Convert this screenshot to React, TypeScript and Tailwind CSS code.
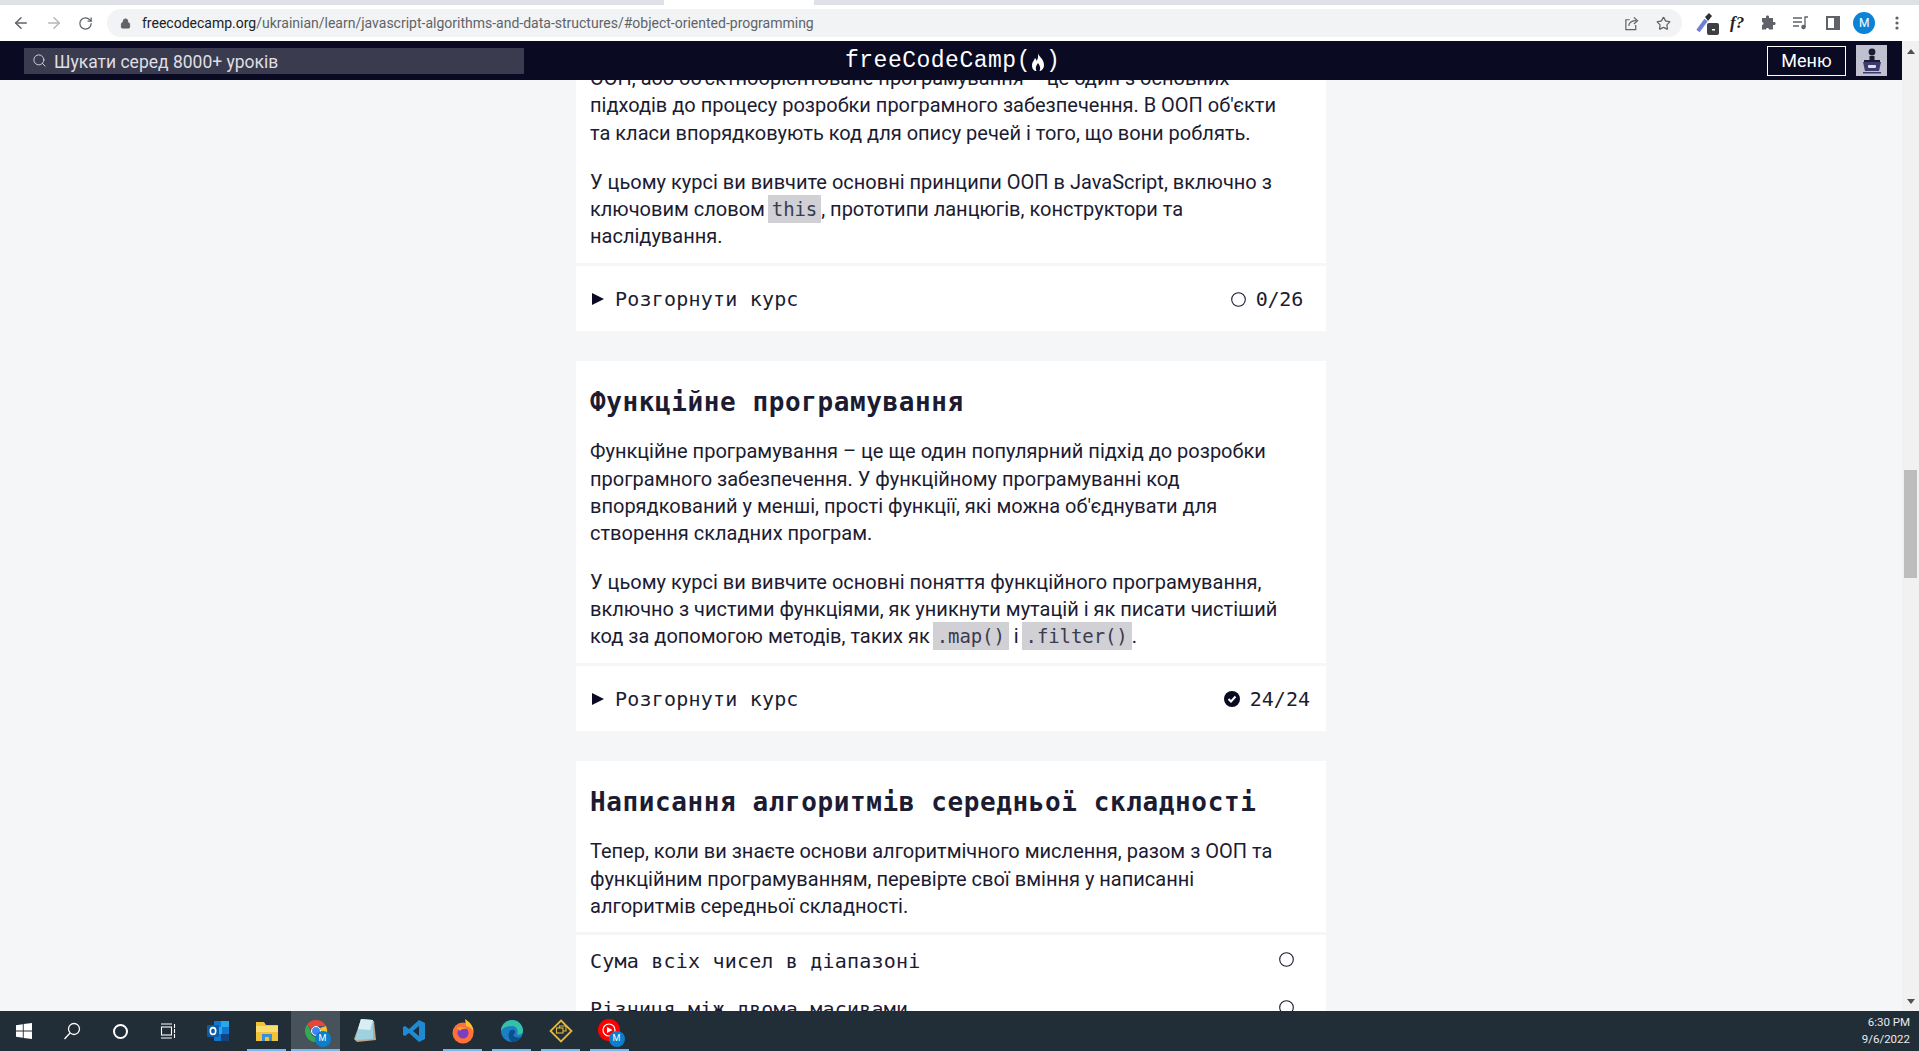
import { Search, ArrowLeft, ArrowRight, RotateCw, Lock, Star } from 'lucide-react';
import type { ReactNode } from 'react';

const bodyFont = "font-['Roboto','Liberation_Sans',sans-serif]";
const monoFont = "font-['DejaVu_Sans_Mono','Liberation_Mono',monospace]";

const Code = ({ children }: { children: string }) => (
    <code className={`${monoFont} text-[19px] tracking-[-0.1px] bg-[#d0d0d5] text-[#3b3b4f] px-[4px] py-[3px] -ml-[2px]`}>{children}</code>
);

const Expand = ({ right }: { right: ReactNode }) => (
    <div className="h-[65px] pt-[2px] flex items-center justify-between pl-[16px]">
        <div className={`flex items-center gap-[11px] ${monoFont} text-[20px] tracking-[0.2px]`}>
            <svg width="12" height="12" viewBox="0 0 12 12" className="shrink-0"><path d="M0 0 L12 6 L0 12 Z" fill="#0a0a23" /></svg>
            <span>Розгорнути курс</span>
        </div>
        {right}
    </div>
);

const Circle = () => (
    <svg width="15" height="15" viewBox="0 0 15 15" className="shrink-0"><circle cx="7.5" cy="7.5" r="6.8" fill="none" stroke="#1b1b32" strokeWidth="1.1" /></svg>
);

const Row = ({ title }: { title: string }) => (
    <div className={`h-[48px] flex items-center justify-between pl-[14px] pr-[32px] ${monoFont} text-[20px] tracking-[0.2px]`}>
        <span className="pt-[4px]">{title}</span>
        <Circle />
    </div>
);

const Badge = () => (
    <div className="absolute -right-[3px] -bottom-[4px] w-[16px] h-[16px] rounded-full bg-[#0b7fcb] text-white text-[9px] flex items-center justify-center">M</div>
);

const TaskCell = ({ children, open, active }: { children: ReactNode; open?: boolean; active?: boolean }) => (
    <div className={`relative w-[49px] h-full flex items-center justify-center ${active ? 'bg-[#48525a]' : ''}`}>
        {children}
        {open && <div className={`absolute bottom-0 h-[2px] bg-[#76b9ed] ${active ? 'inset-x-0' : 'inset-x-[5px]'}`} />}
    </div>
);

const App = () => {
    return (
        <div className={`h-[1051px] w-full flex flex-col overflow-hidden ${bodyFont}`}>
            {/* вкладки */}
            <div className="h-[5px] bg-[#dee1e6] flex shrink-0">
                <div className="w-[664px]" />
                <div className="w-[150px] bg-white" />
            </div>
            {/* панель браузера */}
            <div className="h-[36px] bg-white flex items-center text-[#5f6368] shrink-0 pb-[4px] pt-[4px]">
                <div className="flex items-center w-[107px] pl-[12px] gap-[15px]">
                    <ArrowLeft size={18} />
                    <ArrowRight size={18} className="text-[#b4b7bb]" />
                    <RotateCw size={15} />
                </div>
                <div className="w-[1575px] h-[28px] rounded-full bg-[#f1f3f4] flex items-center pl-[13px] pr-[11px]">
                    <Lock size={11} fill="#5f6368" className="mr-[11px]" />
                    <span className="text-[14px] text-[#202124]">freecodecamp.org<span className="text-[#5f6368]">/ukrainian/learn/javascript-algorithms-and-data-structures/#object-oriented-programming</span></span>
                    <div className="ml-auto flex items-center gap-[17px]">
                        <svg width="15" height="15" viewBox="0 0 16 16" fill="none" stroke="#5f6368" strokeWidth="1.3"><path d="M12.5 9.5 V14.5 H2 V4 H6" /><path d="M5 10.5 C5.5 7 8 5 13 5" /><path d="M10.5 1.5 L14.5 5 L10.5 8.5" /></svg>
                        <Star size={15} />
                    </div>
                </div>
                <div className="flex-1 relative h-full flex items-center">
                    <svg width="26" height="24" viewBox="0 0 26 24" className="ml-[12px]">
                        <path d="M4 20 L12 9" stroke="#6f7fd6" strokeWidth="4" />
                        <path d="M11 6 L15 2 L18 5 L14 10 Z" fill="#303134" />
                        <rect x="13" y="12" width="12" height="12" rx="2" fill="#3c4043" />
                        <rect x="18" y="18" width="3" height="1.5" fill="#fff" />
                    </svg>
                    <span className="font-['Liberation_Serif',serif] italic font-bold text-[17px] text-[#202124] ml-[10px]">f?</span>
                    <svg width="16" height="16" viewBox="0 0 16 16" className="ml-[16px]"><path d="M6 1.5 C6 0 9 0 9 1.5 V3 H13 V7 H14.5 C16 7 16 10 14.5 10 H13 V14.5 H9 C9 12.5 6 12.5 6 14.5 H2 V10 C4 10 4 7 2 7 V3 H6 Z" fill="#5f6368" /></svg>
                    <svg width="16" height="14" viewBox="0 0 16 14" className="ml-[17px]" fill="none" stroke="#5f6368" strokeWidth="1.3"><path d="M0 2 H9 M0 6 H9 M0 10 H6" /><path d="M12 11 V1 H15" /><circle cx="10.5" cy="11" r="1.6" fill="#5f6368" /></svg>
                    <div className="w-[14px] h-[14px] border-[2px] border-r-[6px] border-[#5f6368] ml-[17px]" />
                    <div className="w-[22px] h-[22px] rounded-full bg-[#0b84d8] text-white text-[12px] flex items-center justify-center ml-[13px]">M</div>
                    <svg width="4" height="14" viewBox="0 0 4 14" className="ml-[20px]"><circle cx="2" cy="2" r="1.6" fill="#5f6368" /><circle cx="2" cy="7" r="1.6" fill="#5f6368" /><circle cx="2" cy="12" r="1.6" fill="#5f6368" /></svg>
                </div>
            </div>
            <div className="flex-1 min-h-0 flex">
                <div className="flex-1 min-w-0 flex flex-col">
                    {/* навігація */}
                    <div className="h-[39px] bg-[#0a0a23] flex items-center shrink-0 relative z-10">
                        <div className="ml-[24px] w-[500px] h-[26px] bg-[#3b3b4f] flex items-center pl-[8px] gap-[7px] text-[#dfdfe2] text-[17.5px]">
                            <Search size={15} strokeWidth={1.4} />
                            <span className="pt-[3px]">Шукати серед 8000+ уроків</span>
                        </div>
                        <div className="absolute left-[845px] pt-[2px] font-['Liberation_Mono',monospace] text-[23px] tracking-[0.5px] text-white flex items-center">
                            freeCodeCamp(
                            <svg width="16" height="20" viewBox="0 0 16 20" className="-ml-[1px]"><path d="M8 1 C9 5 14 7 14 13 C14 17 11 19 9.5 19 C11 16 10 14 8 11 C6 14 5 16 6.5 19 C4 19 2 17 2 13 C2 10 4 9 5 6 C6 7 6.5 8 6.5 9 C8 7 8.5 4 8 1 Z" fill="#fff" /></svg>
                            )
                        </div>
                        <div className="ml-auto flex items-center mr-[15px] gap-[10px]">
                            <div className="h-[30px] w-[79px] border border-white text-white text-[18px] flex items-center justify-center">Меню</div>
                            <div className="w-[31px] h-[31px] bg-[#c0c0d0] flex items-center justify-center">
                                <svg width="24" height="27" viewBox="0 0 24 27">
                                    <circle cx="12" cy="5" r="3.4" fill="#1b1b32" />
                                    <path d="M9.5 9 H14.5 V13 H20 V16 H4 V13 H9.5 Z" fill="#1b1b32" />
                                    <path d="M3 15 H21 L19 24 H5 Z" fill="#3b3b6f" />
                                    <rect x="3" y="25" width="18" height="1.5" fill="#3b3b6f" />
                                    <rect x="8" y="18" width="8" height="3" rx="1" fill="#dfdfe2" />
                                </svg>
                            </div>
                        </div>
                    </div>
                    {/* сторінка */}
                    <div className="flex-1 min-h-0 bg-[#f5f6f7] overflow-hidden">
                        <div className="w-[750px] ml-[576px] -mt-[15px] flex flex-col gap-[30px] text-[20px] leading-[27.3px] text-[#1b1b32]">
                            <section className="bg-white">
                                <div className="pl-[14px] pr-[34px] pb-[12.2px]">
                                    <p className="mb-[22px]">ООП, або об'єктноорієнтоване програмування – це один з основних підходів до процесу розробки програмного забезпечення. В ООП об'єкти та класи впорядковують код для опису речей і того, що вони роблять.</p>
                                    <p>У цьому курсі ви вивчите основні принципи ООП в JavaScript, включно з ключовим словом <Code>this</Code>, прототипи ланцюгів, конструктори та наслідування.</p>
                                </div>
                                <div className="border-t-[3px] border-[#f5f6f7]">
                                    <Expand right={<div className={`flex items-center gap-[10px] pr-[23px] ${monoFont} text-[20px] tracking-[-0.2px]`}><Circle /><span>0/26</span></div>} />
                                </div>
                            </section>
                            <section className="bg-white">
                                <div className="pl-[14px] pr-[34px] pt-[23px] pb-[12.4px]">
                                    <h2 className={`${monoFont} font-bold text-[26px] leading-[36px] tracking-[0.6px] mb-[18.5px]`}>Функційне програмування</h2>
                                    <p className="mb-[21px]">Функційне програмування – це ще один популярний підхід до розробки програмного забезпечення. У функційному програмуванні код впорядкований у менші, прості функції, які можна об'єднувати для створення складних програм.</p>
                                    <p>У цьому курсі ви вивчите основні поняття функційного програмування, включно з чистими функціями, як уникнути мутацій і як писати чистіший код за допомогою методів, таких як <Code>.map()</Code> і <Code>.filter()</Code>.</p>
                                </div>
                                <div className="border-t-[3px] border-[#f5f6f7]">
                                    <Expand right={<div className={`flex items-center gap-[10px] pr-[16px] ${monoFont} text-[20px]`}><svg width="16" height="16" viewBox="0 0 16 16"><circle cx="8" cy="8" r="8" fill="#0a0a23" /><path d="M4.5 8 L7 10.5 L11.5 5.5" stroke="#fff" strokeWidth="2" fill="none" /></svg><span>24/24</span></div>} />
                                </div>
                            </section>
                            <section className="bg-white">
                                <div className="pl-[14px] pr-[34px] pt-[23px] pb-[11.6px]">
                                    <h2 className={`${monoFont} font-bold text-[26px] leading-[36px] tracking-[0.6px] mb-[18.5px]`}>Написання алгоритмів середньої складності</h2>
                                    <p>Тепер, коли ви знаєте основи алгоритмічного мислення, разом з ООП та функційним програмуванням, перевірте свої вміння у написанні алгоритмів середньої складності.</p>
                                </div>
                                <div className="border-t-[3px] border-[#f5f6f7] pt-[1px]">
                                    <Row title="Сума всіх чисел в діапазоні" />
                                    <Row title="Різниця між двома масивами" />
                                </div>
                            </section>
                        </div>
                    </div>
                </div>
                {/* скролбар */}
                <div className="w-[17px] bg-[#f1f1f1] flex flex-col items-center pt-[8px] pb-[7px] shrink-0">
                    <div className="w-0 h-0 border-x-[4px] border-x-transparent border-b-[5px] border-b-[#505050]" />
                    <div className="w-[13px] h-[108px] bg-[#bdbdbd] mt-[416px]" />
                    <div className="mt-auto w-0 h-0 border-x-[4px] border-x-transparent border-t-[5px] border-t-[#505050]" />
                </div>
            </div>
            {/* панель задач */}
            <div className="h-[40px] bg-[#212e38] flex items-center shrink-0 text-white">
                <div className="w-[48px] flex justify-center"><svg width="16" height="16" viewBox="0 0 16 16"><path d="M0 2.2 L6.8 1.3 V7.5 H0 Z M7.7 1.1 L16 0 V7.5 H7.7 Z M0 8.5 H6.8 V14.7 L0 13.8 Z M7.7 8.5 H16 V16 L7.7 14.9 Z" fill="#fff" /></svg></div>
                <div className="w-[48px] flex justify-center"><svg width="18" height="18" viewBox="0 0 18 18" fill="none" stroke="#fff" strokeWidth="1.3"><circle cx="11" cy="7" r="5.5" /><path d="M7 11 L1.5 17" /></svg></div>
                <div className="w-[48px] flex justify-center"><div className="w-[15px] h-[15px] rounded-full border-[2px] border-white" /></div>
                <div className="w-[48px] flex justify-center"><svg width="16" height="16" viewBox="0 0 16 16" fill="none" stroke="#fff" strokeWidth="1.1"><rect x="1.5" y="4" width="10" height="8" /><path d="M1 1 H12 M1 15 H12 M14.5 1 V5 M14.5 6 V10 M14.5 11 V15" /></svg></div>
                <div className="w-[1px]" />
                <TaskCell>
                    <svg width="24" height="24" viewBox="0 0 24 24">
                        <rect x="8" y="2" width="15" height="20" rx="1" fill="#0f78d4" />
                        <rect x="15" y="2" width="8" height="6" fill="#28a8ea" />
                        <rect x="8" y="8" width="8" height="7" fill="#28a8ea" />
                        <rect x="15" y="15" width="8" height="7" fill="#14447d" />
                        <rect x="1" y="6" width="12" height="12" rx="1" fill="#0a5ca8" />
                        <ellipse cx="7" cy="12" rx="2.7" ry="3.4" fill="none" stroke="#fff" strokeWidth="1.6" />
                    </svg>
                </TaskCell>
                <TaskCell open>
                    <svg width="24" height="22" viewBox="0 0 24 22">
                        <path d="M1 2 H9 L11 5 H23 V21 H1 Z" fill="#f0c33c" />
                        <rect x="1" y="6" width="22" height="6" fill="#fbdc6e" />
                        <path d="M7 21 V14 H17 V21 H14 V17 H10 V21 Z" fill="#3a8ed6" />
                    </svg>
                </TaskCell>
                <TaskCell open active>
                    <div className="relative w-[24px] h-[24px]">
                        <svg width="24" height="24" viewBox="0 0 24 24">
                            <path d="M12 1 A11 11 0 0 1 22 7 H12 A5 5 0 0 0 7 11 L3.5 5 A11 11 0 0 1 12 1 Z" fill="#e8453c" />
                            <path d="M22 7 A11 11 0 0 1 12 23 L16 16 A5 5 0 0 0 16 9 Z" fill="#f7c22f" />
                            <path d="M3.5 5 A11 11 0 0 0 12 23 L16 16 A5 5 0 0 1 7 13 Z" fill="#34a853" />
                            <circle cx="12" cy="12" r="4.5" fill="#4285f4" stroke="#fff" strokeWidth="1" />
                        </svg>
                        <Badge />
                    </div>
                </TaskCell>
                <TaskCell>
                    <svg width="24" height="26" viewBox="0 0 24 26">
                        <path d="M8 2 L21 3 L23 22 L4 24 L1 21 Z" fill="#b9a98f" />
                        <path d="M8 1 L20 2 L20 21 L2 22 Z" fill="#9fd2e0" />
                        <path d="M8 1 L20 2 L17 12 L5 11 Z" fill="#d9eef4" />
                    </svg>
                </TaskCell>
                <TaskCell>
                    <svg width="24" height="24" viewBox="0 0 24 24">
                        <path d="M17 1 L23 4 V20 L17 23 L7 14 L3 17 L1 16 V8 L3 7 L7 10 Z M17 7 L11 12 L17 17 Z" fill="#1f8ad2" fillRule="evenodd" />
                    </svg>
                </TaskCell>
                <TaskCell open>
                    <svg width="24" height="26" viewBox="0 0 24 26">
                        <circle cx="12" cy="15" r="10.5" fill="#ff7139" />
                        <path d="M14 1 C20 5 23 9 22.5 15 C22 11 19 9 15 8 Z" fill="#ffbd2e" />
                        <circle cx="12" cy="15" r="5.5" fill="#7a3fc1" />
                        <path d="M6 10 C9 8 14 9 16 11 C13 10.5 10 11 9 13 Z" fill="#ff9f2e" />
                    </svg>
                </TaskCell>
                <TaskCell open>
                    <svg width="24" height="24" viewBox="0 0 24 24">
                        <circle cx="12" cy="12" r="11" fill="#1b7fc4" />
                        <path d="M1 12 A11 11 0 0 1 23 12 C23 15 20 16 17 15.5 C19 11 16 7 12 7 C6 7 2 10 1 12 Z" fill="#35c1a5" />
                        <path d="M9 14 C9 11 12 10 14 11 C16 12 15 15 13 16 C15 19 19 19 21 18 A11 11 0 0 1 12 23 C9 21 8 17 9 14 Z" fill="#0c4f8f" />
                    </svg>
                </TaskCell>
                <TaskCell open>
                    <svg width="24" height="24" viewBox="0 0 24 24" fill="none" stroke="#e5b73b">
                        <path d="M12 1.5 L22.5 12 L12 22.5 L1.5 12 Z" strokeWidth="1.8" />
                        <rect x="7.5" y="9" width="6.5" height="5" strokeWidth="1.1" />
                        <path d="M10.5 9 V7 H17 V12 H14" strokeWidth="1.1" />
                    </svg>
                </TaskCell>
                <TaskCell open>
                    <div className="relative w-[24px] h-[24px]">
                        <svg width="24" height="24" viewBox="0 0 24 24">
                            <circle cx="11" cy="11" r="11" fill="#f00" />
                            <circle cx="11" cy="11" r="6" fill="none" stroke="#fff" strokeWidth="1.2" />
                            <path d="M9 8 L14.5 11 L9 14 Z" fill="#fff" />
                        </svg>
                        <Badge />
                    </div>
                </TaskCell>
                <div className="ml-auto pr-[9px] text-[11.5px] leading-[17px] text-right text-[#e8eaed]">
                    <div>6:30 PM</div>
                    <div>9/6/2022</div>
                </div>
            </div>
        </div>
    );
};

export default App;
